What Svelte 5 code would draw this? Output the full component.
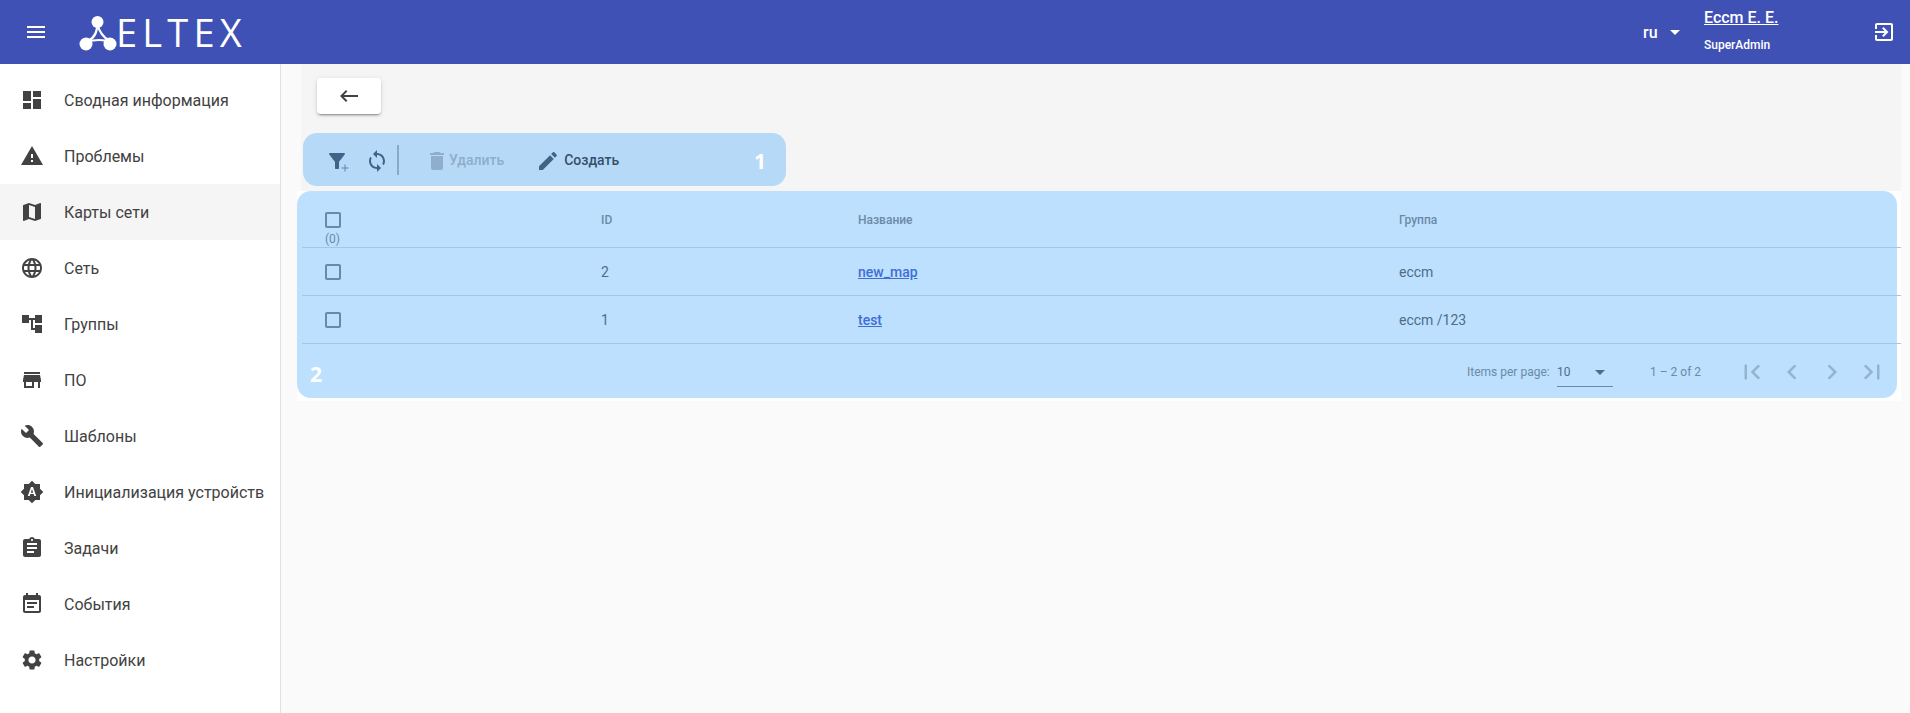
<script>
  const icons = {
    dashboard: "M3 13h8V3H3v10zm0 8h8v-6H3v6zm10 0h8V11h-8v10zm0-18v6h8V3h-8z",
    warning: "M1 21h22L12 2 1 21zm12-3h-2v-2h2v2zm0-4h-2v-4h2v4z",
    map: "M20.5 3l-.16.03L15 5.1 9 3 3.36 4.9c-.21.07-.36.25-.36.48V20.5c0 .28.22.5.5.5l.16-.03L9 18.9l6 2.1 5.64-1.9c.21-.07.36-.25.36-.48V3.5c0-.28-.22-.5-.5-.5zM15 19l-6-2.11V5l6 2.11V19z",
    language: "M11.99 2C6.47 2 2 6.48 2 12s4.47 10 9.99 10C17.52 22 22 17.52 22 12S17.52 2 11.99 2zm6.93 6h-2.95c-.32-1.25-.78-2.45-1.38-3.56 1.84.63 3.37 1.91 4.33 3.56zM12 4.04c.83 1.2 1.48 2.53 1.91 3.96h-3.82c.43-1.43 1.08-2.76 1.91-3.96zM4.26 14C4.1 13.36 4 12.69 4 12s.1-1.36.26-2h3.38c-.08.66-.14 1.32-.14 2 0 .68.06 1.34.14 2H4.26zm.82 2h2.95c.32 1.25.78 2.45 1.38 3.56-1.84-.63-3.37-1.9-4.33-3.56zm2.95-8H5.08c.96-1.66 2.49-2.93 4.33-3.56C8.81 5.55 8.35 6.75 8.03 8zM12 19.96c-.83-1.2-1.48-2.53-1.91-3.96h3.82c-.43 1.43-1.08 2.76-1.91 3.96zM14.34 14H9.66c-.09-.66-.16-1.32-.16-2 0-.68.07-1.35.16-2h4.68c.09.65.16 1.32.16 2 0 .68-.07 1.34-.16 2zm.25 5.56c.6-1.11 1.06-2.31 1.38-3.56h2.95c-.96 1.65-2.49 2.93-4.33 3.56zM16.36 14c.08-.66.14-1.32.14-2 0-.68-.06-1.34-.14-2h3.38c.16.64.26 1.31.26 2s-.1 1.36-.26 2h-3.38z",
    tree: "M22 11V3h-7v3H9V3H2v8h7V8h2v10h4v3h7v-8h-7v3h-2V8h2v3z",
    store: "M20 4H4v2h16V4zm1 10v-2l-1-5H4l-1 5v2h1v6h10v-6h4v6h2v-6h1zm-9 4H6v-4h6v4z",
    build: "M22.7 19l-9.1-9.1c.9-2.3.4-5-1.5-6.9-2-2-5-2.4-7.4-1.3L9 6 6 9 1.6 4.7C.4 7.1.9 10.1 2.9 12.1c1.9 1.9 4.6 2.4 6.9 1.5l9.1 9.1c.4.4 1 .4 1.4 0l2.3-2.3c.5-.4.5-1.1.1-1.4z",
    auto: "M20 8.69V4h-4.69L12 .69 8.69 4H4v4.69L.69 12 4 15.31V20h4.69L12 23.31 15.31 20H20v-4.69L23.31 12 20 8.69zM14.3 16l-.7-2h-3.2l-.7 2H7.8L11 7h2l3.2 9h-1.9zm-3.45-3.35h2.3L12 9l-1.15 3.65z",
    assignment: "M19 3h-4.18C14.4 1.84 13.3 1 12 1c-1.3 0-2.4.84-2.82 2H5c-1.1 0-2 .9-2 2v14c0 1.1.9 2 2 2h14c1.1 0 2-.9 2-2V5c0-1.1-.9-2-2-2zm-7 0c.55 0 1 .45 1 1s-.45 1-1 1-1-.45-1-1 .45-1 1-1zm2 14H7v-2h7v2zm3-4H7v-2h10v2zm0-4H7V7h10v2z",
    event: "M17 10H7v2h10v-2zm2-7h-1V1h-2v2H8V1H6v2H5c-1.11 0-1.99.9-1.99 2L3 19c0 1.1.89 2 2 2h14c1.1 0 2-.9 2-2V5c0-1.1-.9-2-2-2zm0 16H5V8h14v11zm-5-5H7v2h7v-2z",
    settings: "M19.14 12.94c.04-.3.06-.61.06-.94 0-.32-.02-.64-.07-.94l2.03-1.58c.18-.14.23-.41.12-.61l-1.92-3.32c-.12-.22-.37-.29-.59-.22l-2.39.96c-.5-.38-1.03-.7-1.62-.94l-.36-2.54c-.04-.24-.24-.41-.48-.41h-3.84c-.24 0-.43.17-.47.41l-.36 2.54c-.59.24-1.13.57-1.62.94l-2.39-.96c-.22-.08-.47 0-.59.22L2.74 8.87c-.12.21-.08.47.12.61l2.03 1.58c-.05.3-.09.63-.09.94s.02.64.07.94l-2.03 1.58c-.18.14-.23.41-.12.61l1.92 3.32c.12.22.37.29.59.22l2.39-.96c.5.38 1.03.7 1.62.94l.36 2.54c.05.24.24.41.48.41h3.84c.24 0 .44-.17.47-.41l.36-2.54c.59-.24 1.13-.56 1.62-.94l2.39.96c.22.08.47 0 .59-.22l1.92-3.32c.12-.22.07-.47-.12-.61l-2.01-1.58zM12 15.6c-1.98 0-3.6-1.62-3.6-3.6s1.62-3.6 3.6-3.6 3.6 1.62 3.6 3.6-1.62 3.6-3.6 3.6z",
    menu: "M3 18h18v-2H3v2zm0-5h18v-2H3v2zm0-7v2h18V6H3z",
    back: "M21 11H6.83l3.58-3.59L9 6l-6 6 6 6 1.41-1.41L6.83 13H21z",
    sync: "M12 4V1L8 5l4 4V6c3.31 0 6 2.69 6 6 0 1.01-.25 1.97-.7 2.8l1.46 1.46C19.54 15.03 20 13.57 20 12c0-4.42-3.58-8-8-8zm0 14c-3.31 0-6-2.69-6-6 0-1.01.25-1.97.7-2.8L5.24 7.74C4.46 8.97 4 10.43 4 12c0 4.42 3.58 8 8 8v3l4-4-4-4v3z",
    trash: "M6 19c0 1.1.9 2 2 2h8c1.1 0 2-.9 2-2V7H6v12zM19 4h-3.5l-1-1h-5l-1 1H5v2h14V4z",
    edit: "M3 17.25V21h3.75L17.81 9.94l-3.75-3.75L3 17.25zM20.71 7.04c.39-.39.39-1.02 0-1.41l-2.34-2.34c-.39-.39-1.02-.39-1.41 0l-1.83 1.83 3.75 3.75 1.83-1.83z",
    exit: "M10.09 15.59L11.5 17l5-5-5-5-1.41 1.41L12.67 11H3v2h9.67l-2.58 2.59zM19 3H5c-1.11 0-2 .9-2 2v4h2V5h14v14H5v-4H3v4c0 1.1.89 2 2 2h14c1.1 0 2-.9 2-2V5c0-1.11-.9-2-2-2z",
    filter: "M4.25 5.61C6.27 8.2 10 13 10 13v6c0 .55.45 1 1 1h2c.55 0 1-.45 1-1v-6s3.72-4.8 5.74-7.39A.998.998 0 0018.95 4H5.04a1 1 0 00-.79 1.61z",
    plus: "M19 13h-6v6h-2v-6H5v-2h6V5h2v6h6v2z",
    first: "M18.41 16.59L13.82 12l4.59-4.59L17 6l-6 6 6 6zM6 6h2v12H6z",
    prev: "M15.41 7.41L14 6l-6 6 6 6 1.41-1.41L10.83 12z",
    next: "M10 6L8.59 7.41 13.17 12l-4.58 4.59L10 18l6-6z",
    last: "M5.59 7.41L10.18 12l-4.59 4.59L7 18l6-6-6-6zM16 6h2v12h-2z",
  };

  const nav = [
    { label: "Сводная информация", icon: "dashboard" },
    { label: "Проблемы", icon: "warning" },
    { label: "Карты сети", icon: "map", active: true },
    { label: "Сеть", icon: "language" },
    { label: "Группы", icon: "tree" },
    { label: "ПО", icon: "store" },
    { label: "Шаблоны", icon: "build" },
    { label: "Инициализация устройств", icon: "auto" },
    { label: "Задачи", icon: "assignment" },
    { label: "События", icon: "event" },
    { label: "Настройки", icon: "settings" },
  ];

  const rows = [
    { id: 2, name: "new_map", group: "eccm" },
    { id: 1, name: "test", group: "eccm /123" },
  ];
</script>

{#snippet icon(name, size = 24)}
  <svg class="icon" width={size} height={size} viewBox="0 0 24 24" fill="currentColor">
    <path d={icons[name]} />
  </svg>
{/snippet}

<header class="topbar">
  <button class="menu-btn">{@render icon("menu")}</button>
  <div class="logo">
    <svg width="53" height="40" viewBox="0 0 53 40" fill="none">
      <g stroke="#fff" stroke-width="2.2">
        <path d="M30 11 Q31 24 21 29" />
        <path d="M30 11 Q33 24 43 29" />
        <path d="M20 30 Q32 26 44 30" />
      </g>
      <g fill="#fff">
        <circle cx="30.5" cy="10" r="6" />
        <circle cx="19" cy="32" r="6.5" />
        <circle cx="43" cy="32" r="6.5" />
      </g>
    </svg>
    <span class="wordmark">ELTEX</span>
  </div>
  <div class="spacer"></div>
  <div class="lang">ru<span class="caret"></span></div>
  <div class="user">
    <a class="user-name" href="#user">Eccm E. E.</a>
    <span class="user-role">SuperAdmin</span>
  </div>
  <button class="exit-btn">{@render icon("exit")}</button>
</header>

<div class="layout">
  <nav class="sidebar">
    {#each nav as item}
      <div class="nav-item" class:active={item.active}>
        {@render icon(item.icon)}
        <span>{item.label}</span>
      </div>
    {/each}
  </nav>

  <main class="content">
    <section class="top-panel">
      <button class="back-btn">{@render icon("back")}</button>
      <div class="toolbar">
        <span class="tool filter">
          {@render icon("filter")}
          <svg class="plus" width="12" height="12" viewBox="0 0 24 24" fill="currentColor"><path d={icons.plus} /></svg>
        </span>
        <span class="tool sync">{@render icon("sync")}</span>
        <span class="divider"></span>
        <span class="action disabled">{@render icon("trash")}Удалить</span>
        <span class="action create">{@render icon("edit")}Создать</span>
        <span class="mark mark-one">1</span>
      </div>
    </section>

    <div class="table-wrap">
      <section class="table-card">
        <div class="row head">
          <div class="cell-check">
            <span class="checkbox"></span>
            <span class="count">(0)</span>
          </div>
          <div>ID</div>
          <div>Название</div>
          <div>Группа</div>
        </div>
        {#each rows as row}
          <div class="row">
            <div class="cell-check"><span class="checkbox"></span></div>
            <div>{row.id}</div>
            <div><a href="#map">{row.name}</a></div>
            <div>{row.group}</div>
          </div>
        {/each}
        <div class="pager">
          <span class="mark mark-two">2</span>
          <span class="per-label">Items per page:</span>
          <span class="per-select">10<span class="caret"></span></span>
          <span class="range">1 – 2 of 2</span>
          <span class="pager-btns">
            {@render icon("first", 30)}
            {@render icon("prev", 30)}
            {@render icon("next", 30)}
            {@render icon("last", 30)}
          </span>
        </div>
      </section>
    </div>
  </main>
</div>

<style>
  :global(body) {
    margin: 0;
    font-family: Roboto, "Liberation Sans", sans-serif;
    background: #fafafa;
  }

  button {
    border: 0;
    background: none;
    padding: 0;
    color: inherit;
    font: inherit;
  }

  .icon {
    display: block;
    flex: none;
  }

  .topbar {
    height: 64px;
    display: flex;
    align-items: center;
    background: #3f51b5;
    color: #fff;
  }

  .menu-btn {
    width: 24px;
    height: 24px;
    margin-left: 24px;
  }

  .logo {
    display: flex;
    align-items: center;
    margin-left: 19px;
  }

  .wordmark {
    font-family: "Open Sans", sans-serif;
    font-size: 38px;
    line-height: 40px;
    letter-spacing: 5.2px;
    margin-left: -4px;
  }

  .spacer {
    flex: 1;
  }

  .lang {
    display: flex;
    align-items: center;
    font-size: 16px;
    font-weight: 500;
    width: 61px;
  }

  .caret {
    width: 0;
    height: 0;
    border-left: 5px solid transparent;
    border-right: 5px solid transparent;
    border-top: 5px solid currentColor;
  }

  .lang .caret {
    margin-left: 12px;
  }

  .user {
    display: flex;
    flex-direction: column;
    width: 168px;
  }

  .user-name {
    color: #fff;
    font-size: 16px;
    font-weight: 500;
    line-height: 20px;
    margin-top: -3px;
  }

  .user-role {
    font-size: 12px;
    font-weight: 500;
    line-height: 16px;
    margin-top: 9px;
  }

  .exit-btn {
    width: 24px;
    height: 24px;
    margin-right: 14px;
  }

  .layout {
    display: flex;
    height: 649px;
  }

  .sidebar {
    width: 280px;
    flex: none;
    padding-top: 8px;
    background: #fff;
    border-right: 1px solid #e0e0e0;
    color: #424242;
  }

  .nav-item {
    height: 56px;
    display: flex;
    align-items: center;
    gap: 20px;
    padding-left: 20px;
    font-size: 16px;
    white-space: nowrap;
  }

  .nav-item.active {
    background: #f5f5f5;
  }

  .content {
    flex: 1;
    min-width: 0;
  }

  .top-panel {
    margin: 0 9px 0 20px;
    height: 127px;
    padding-top: 14px;
    box-sizing: border-box;
    background: #f5f5f5;
  }

  .back-btn {
    display: flex;
    align-items: center;
    justify-content: center;
    width: 64px;
    height: 36px;
    margin-left: 16px;
    background: #fff;
    border-radius: 4px;
    color: #424242;
    box-shadow: 0 3px 1px -2px rgba(0, 0, 0, 0.2), 0 2px 2px 0 rgba(0, 0, 0, 0.14), 0 1px 5px 0 rgba(0, 0, 0, 0.12);
  }

  .toolbar {
    position: relative;
    display: flex;
    align-items: center;
    width: 483px;
    height: 53px;
    margin: 19px 0 0 2px;
    background: #b6d9f7;
    border-radius: 14px;
    color: #3f6488;
    box-sizing: border-box;
  }

  .tool {
    position: relative;
    display: block;
    width: 24px;
    height: 24px;
    margin-top: 3px;
  }

  .filter {
    margin-left: 22px;
  }

  .plus {
    position: absolute;
    left: 14px;
    top: 13px;
    color: #5f86a8;
  }

  .sync {
    margin-left: 16px;
  }

  .divider {
    width: 2px;
    height: 30px;
    margin: 0 26px 0 8px;
    background: #8aa9c6;
  }

  .action {
    display: flex;
    align-items: center;
    margin-right: 32px;
    font-size: 14px;
    font-weight: 500;
    color: #34506c;
  }

  .action .icon {
    margin-top: 3px;
    color: #3f6488;
  }

  .action.create {
    gap: 4px;
  }

  .action.disabled,
  .action.disabled .icon {
    color: #8eaecb;
  }

  .mark {
    position: absolute;
    color: #fff;
    font-family: "Open Sans", sans-serif;
    font-weight: 700;
    font-size: 21px;
    line-height: 24px;
  }

  .mark-one {
    right: 20px;
    top: 16px;
  }

  .table-wrap {
    height: 210px;
    margin: 0 9px 0 16px;
    background: #fff;
  }

  .table-card {
    position: relative;
    height: 207px;
    margin-right: 4px;
    background: #bde0fe;
    border-radius: 14px;
    font-size: 14px;
    color: #4f6d86;
  }

  .row {
    display: grid;
    grid-template-columns: 299px 257px 541px 1fr;
    align-items: center;
    height: 48px;
    margin: 0 -4px 0 5px;
    border-bottom: 1px solid #a2c6e6;
    box-sizing: border-box;
  }

  .row.head {
    height: 57px;
    padding-top: 2px;
    font-size: 12px;
    font-weight: 500;
    color: #6a8aa6;
  }

  .cell-check {
    position: relative;
    padding-left: 23px;
    display: flex;
  }

  .checkbox {
    display: block;
    width: 12px;
    height: 12px;
    border: 2px solid #648aac;
    border-radius: 2px;
  }

  .count {
    position: absolute;
    left: 23px;
    top: 20px;
    font-size: 12px;
    font-weight: 400;
    line-height: 14px;
    color: #6a8aa6;
  }

  .row a {
    color: #3f6fd6;
    font-weight: 500;
  }

  .pager {
    position: relative;
    display: flex;
    align-items: center;
    height: 55px;
    font-size: 12px;
    color: #6a8aa6;
    padding-left: 1170px;
  }

  .mark-two {
    left: 13px;
    top: 18px;
  }

  .per-label {
    width: 90px;
    flex: none;
  }

  .per-select {
    display: flex;
    align-items: center;
    justify-content: space-between;
    width: 56px;
    height: 28px;
    box-sizing: border-box;
    padding: 0 8px 0 0;
    margin-top: 2px;
    border-bottom: 1px solid #6a8aa6;
    color: #4f6d86;
  }

  .range {
    margin-left: 37px;
    white-space: nowrap;
  }

  .pager-btns {
    display: flex;
    gap: 10px;
    margin-left: 36px;
    color: #94b3ce;
  }
</style>
